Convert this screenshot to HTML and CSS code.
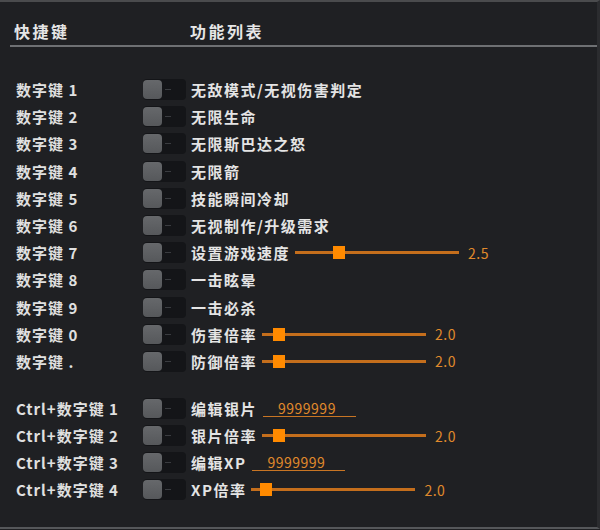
FILE: index.html
```html
<!DOCTYPE html>
<html lang="zh">
<head>
<meta charset="utf-8">
<title>快捷键</title>
<link rel="stylesheet" href="styles.css">
</head>
<body>
<div class="panel">
  <div class="head">
    <div class="h-key">快捷键</div>
    <div class="h-fn">功能列表</div>
  </div>
  <div class="rows">
    <div class="row"><div class="key">数字键 1</div><div class="tg"><span class="knob"></span><span class="dash"></span></div><div class="fn">无敌模式/无视伤害判定</div></div>
    <div class="row"><div class="key">数字键 2</div><div class="tg"><span class="knob"></span><span class="dash"></span></div><div class="fn">无限生命</div></div>
    <div class="row"><div class="key">数字键 3</div><div class="tg"><span class="knob"></span><span class="dash"></span></div><div class="fn">无限斯巴达之怒</div></div>
    <div class="row"><div class="key">数字键 4</div><div class="tg"><span class="knob"></span><span class="dash"></span></div><div class="fn">无限箭</div></div>
    <div class="row"><div class="key">数字键 5</div><div class="tg"><span class="knob"></span><span class="dash"></span></div><div class="fn">技能瞬间冷却</div></div>
    <div class="row"><div class="key">数字键 6</div><div class="tg"><span class="knob"></span><span class="dash"></span></div><div class="fn">无视制作/升级需求</div></div>
    <div class="row"><div class="key">数字键 7</div><div class="tg"><span class="knob"></span><span class="dash"></span></div><div class="fn">设置游戏速度</div><div class="slider"><span class="thumb" style="left:38px"></span></div><div class="val">2.5</div></div>
    <div class="row"><div class="key">数字键 8</div><div class="tg"><span class="knob"></span><span class="dash"></span></div><div class="fn">一击眩晕</div></div>
    <div class="row"><div class="key">数字键 9</div><div class="tg"><span class="knob"></span><span class="dash"></span></div><div class="fn">一击必杀</div></div>
    <div class="row"><div class="key">数字键 0</div><div class="tg"><span class="knob"></span><span class="dash"></span></div><div class="fn">伤害倍率</div><div class="slider"><span class="thumb" style="left:11px"></span></div><div class="val">2.0</div></div>
    <div class="row"><div class="key">数字键 .</div><div class="tg"><span class="knob"></span><span class="dash"></span></div><div class="fn">防御倍率</div><div class="slider"><span class="thumb" style="left:11px"></span></div><div class="val">2.0</div></div>
  </div>
  <div class="rows rows-ctrl">
    <div class="row"><div class="key">Ctrl+数字键 1</div><div class="tg"><span class="knob"></span><span class="dash"></span></div><div class="fn">编辑银片</div><div class="input">9999999</div></div>
    <div class="row"><div class="key">Ctrl+数字键 2</div><div class="tg"><span class="knob"></span><span class="dash"></span></div><div class="fn">银片倍率</div><div class="slider"><span class="thumb" style="left:11px"></span></div><div class="val">2.0</div></div>
    <div class="row"><div class="key">Ctrl+数字键 3</div><div class="tg"><span class="knob"></span><span class="dash"></span></div><div class="fn">编辑XP</div><div class="input">9999999</div></div>
    <div class="row"><div class="key">Ctrl+数字键 4</div><div class="tg"><span class="knob"></span><span class="dash"></span></div><div class="fn">XP倍率</div><div class="slider"><span class="thumb" style="left:9px"></span></div><div class="val">2.0</div></div>
  </div>
</div>
</body>
</html>
```

FILE: styles.css
```css
html, body {
  margin: 0;
  padding: 0;
  background: #1f2023;
}
body {
  width: 600px;
  height: 530px;
  overflow: hidden;
  font-family: "Noto Sans CJK SC", "Noto Sans", sans-serif;
  color: #e2e2e2;
}
.panel {
  box-sizing: border-box;
  width: 600px;
  height: 529px;
  border-top: 2px solid #4a4b4d;
  border-right: 3px solid #2b2c2f;
  border-bottom: 2px solid #55575a;
  background: #1f2023;
}
.head {
  display: flex;
  align-items: flex-end;
  height: 45px;
  box-sizing: border-box;
  margin-left: 10px;
  padding-left: 4px;
  padding-bottom: 2px;
  border-bottom: 2px solid #6e7073;
  font-size: 16px;
  font-weight: 700;
  letter-spacing: 2.5px;
  color: #e6e6e6;
}
.h-key {
  width: 176px;
}
.rows {
  display: flex;
  flex-direction: column;
  padding-left: 16px;
  margin-top: 29px;
}
.rows-ctrl {
  margin-top: 20px;
}
.row {
  display: flex;
  align-items: center;
  height: 27.2px;
  font-size: 15px;
  font-weight: 700;
}
.rows-ctrl .row {
  height: 27px;
}
.key {
  width: 127px;
  flex: none;
  color: #e0e0e0;
  letter-spacing: 1px;
  white-space: nowrap;
}
.tg {
  flex: none;
  position: relative;
  width: 43px;
  height: 21px;
  border-radius: 4px;
  background: #141518;
  display: flex;
  align-items: center;
}
.knob {
  width: 19px;
  height: 19px;
  border-radius: 4px;
  background: linear-gradient(#66686b, #56585b);
}
.dash {
  width: 6px;
  height: 1px;
  background: #3a3c40;
  margin-left: 3px;
}
.fn {
  margin-left: 5px;
  color: #e4e4e4;
  white-space: nowrap;
  letter-spacing: 1.5px;
}
.slider {
  position: relative;
  width: 164px;
  height: 3px;
  background: #c46e1c;
  margin-left: 5px;
  flex: none;
}
.thumb {
  position: absolute;
  top: -5px;
  width: 12px;
  height: 13px;
  background: #ff8a00;
}
.val {
  margin-left: 9px;
  font-size: 14px;
  font-weight: 400;
  letter-spacing: 0.5px;
  color: #e08a2c;
}
.input {
  margin-left: 6px;
  width: 78px;
  padding-left: 15px;
  border-bottom: 1px solid #c87524;
  font-size: 14px;
  font-weight: 400;
  letter-spacing: 0.5px;
  color: #e08a2c;
  line-height: 16px;
}
```
